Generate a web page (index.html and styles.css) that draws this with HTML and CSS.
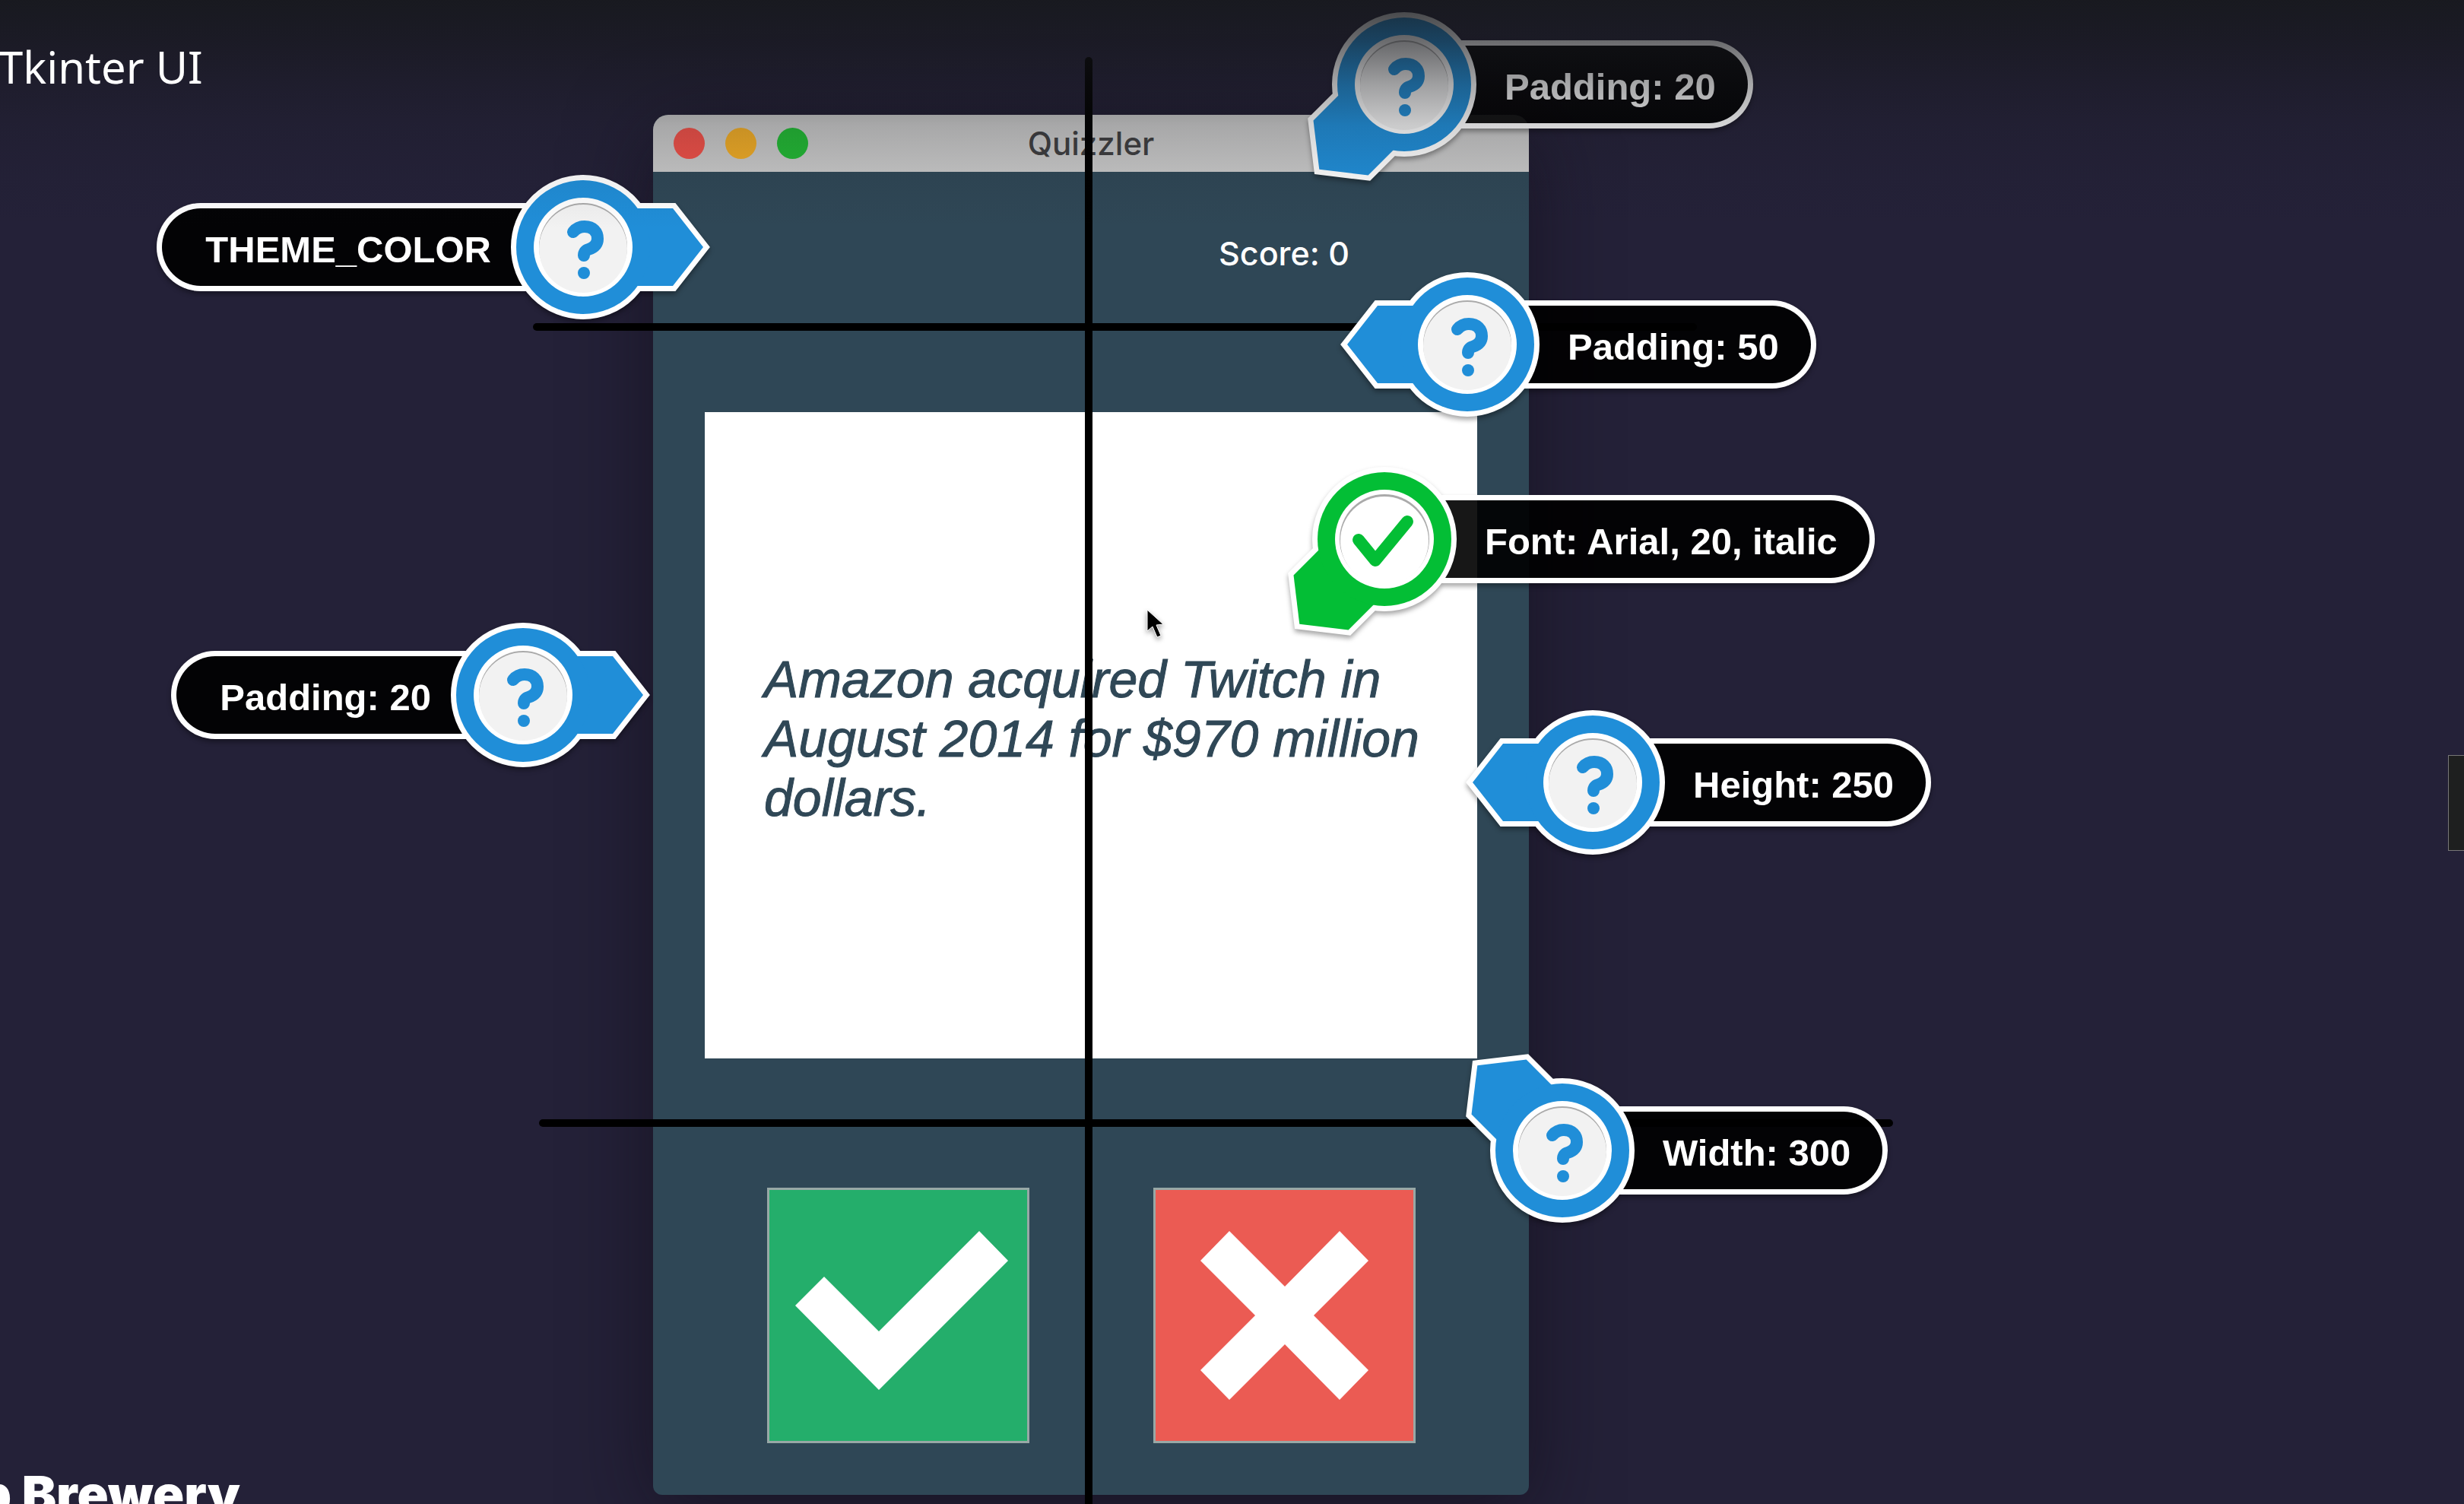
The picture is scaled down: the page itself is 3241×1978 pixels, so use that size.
FILE: index.html
```html
<!DOCTYPE html>
<html lang="en">
<head>
<meta charset="utf-8">
<meta name="viewport" content="width=device-width, initial-scale=1">
<title>Tkinter UI</title>
<link rel="stylesheet" href="styles.css">
</head>
<body>
<svg class="defs" aria-hidden="true">
  <symbol id="arrow" viewBox="-95 -95 190 190" overflow="visible">
    <g class="pin-outline">
      <path d="M-158 0L-118 -51H0V51H-118Z"/>
      <circle r="88"/>
    </g>
    <path d="M-158 0L-118 -51H0V51H-118Z"/>
    <circle r="88"/>
  </symbol>
  <symbol id="question" viewBox="-95 -95 190 190">
    <circle r="65" fill="#fff"/>
    <circle r="58" fill="#aaa"/>
    <circle r="58" cy="2" fill="#f2f2f2"/>
    <path class="mark" d="M-13 -20C-8 -26 -3 -27 2 -27C13 -27 19 -20 19 -11C19 -3 13 1 7 3C3 4 1 7 1 11"/>
    <circle cx="1" cy="34" r="8"/>
  </symbol>
  <symbol id="tick" viewBox="-95 -95 190 190">
    <circle r="65" fill="#fff"/>
    <circle r="59" fill="#aaa"/>
    <circle r="58" cy="2" fill="#fff"/>
    <path class="mark" d="M-34 1L-12 28L30 -23"/>
  </symbol>
</svg>

<header class="lecture">
  <h1 class="lecture-title">Tkinter UI</h1>
</header>

<main class="stage">
  <section class="window">
    <div class="titlebar">
      <span class="light red"></span>
      <span class="light amber"></span>
      <span class="light green"></span>
      <h2 class="window-title">Quizzler</h2>
    </div>
    <div class="content">
      <p class="score">Score: 0</p>
      <div class="card"><p class="question">Amazon acquired Twitch in August 2014 for $970 million dollars.</p></div>
      <button class="answer true" type="button" aria-label="True">
        <svg viewBox="0 0 345 336"><path d="M279 57L317 96L147 266L37 155L75 117L147 189Z"/></svg>
      </button>
      <button class="answer false" type="button" aria-label="False">
        <svg viewBox="0 0 345 336"><path d="M100 57L62 96L134 168L62 240L100 279L173 206L245 279L283 240L211 168L283 96L245 57L173 130Z"/></svg>
      </button>
    </div>

    <div class="guide column"></div>
    <div class="guide row-top"></div>
    <div class="guide row-bottom"></div>

    <div class="pin after pad-title">
      <svg class="badge"><use href="#arrow" transform="rotate(-45 95 95)"/><use href="#question"/></svg>
      <span class="label">Padding: 20</span>
    </div>
    <div class="pin before theme">
      <span class="label">THEME_COLOR</span>
      <svg class="badge"><use href="#arrow" transform="rotate(180 95 95)"/><use href="#question"/></svg>
    </div>
    <div class="pin after pad-card">
      <svg class="badge"><use href="#arrow"/><use href="#question"/></svg>
      <span class="label">Padding: 50</span>
    </div>
    <div class="pin after font done">
      <svg class="badge"><use href="#arrow" transform="rotate(-45 95 95)"/><use href="#tick"/></svg>
      <span class="label">Font: Arial, 20, italic</span>
    </div>
    <div class="pin before pad-window">
      <span class="label">Padding: 20</span>
      <svg class="badge"><use href="#arrow" transform="rotate(180 95 95)"/><use href="#question"/></svg>
    </div>
    <div class="pin after height">
      <svg class="badge"><use href="#arrow"/><use href="#question"/></svg>
      <span class="label">Height: 250</span>
    </div>
    <div class="pin after width">
      <svg class="badge"><use href="#arrow" transform="rotate(45 95 95)"/><use href="#question"/></svg>
      <span class="label">Width: 300</span>
    </div>

    <svg class="pointer" viewBox="0 0 24 40" aria-hidden="true"><path d="M1 1V29L8 23L14 37L19 35L13 21L22 20Z"/></svg>
  </section>
</main>

<div class="shade"></div>
<p class="brand">App Brewery</p>
<div class="side-tab"></div>
</body>
</html>
```
FILE: styles.css
```css
* {
  box-sizing: border-box;
}

body {
  position: relative;
  margin: 0;
  min-height: 100vh;
  overflow: hidden;
  background: #242138;
  font-family: "Liberation Sans", Arial, sans-serif;
}

h1, h2, p {
  margin: 0;
}

.defs {
  position: absolute;
  width: 0;
  height: 0;
}

/* Player chrome */
.lecture {
  position: relative;
  z-index: 3;
  height: 151px;
  padding-top: 48px;
}

.lecture-title {
  margin-left: -2px;
  color: #fff;
  font: 400 58px/80px "Noto Sans", "Open Sans", sans-serif;
}

.shade {
  position: absolute;
  inset: 0 0 auto;
  z-index: 2;
  height: 300px;
  pointer-events: none;
  background: linear-gradient(
    rgba(22, 24, 27, 0.84) 0,
    rgba(22, 23, 27, 0.64) 53px,
    rgba(22, 23, 27, 0.38) 110px,
    rgba(22, 23, 27, 0.18) 165px,
    rgba(22, 23, 27, 0.07) 230px,
    rgba(22, 23, 27, 0) 300px);
}

.brand {
  position: absolute;
  right: calc(100% - 316px);
  bottom: -27px;
  color: #fff;
  font: 900 68px/80px Inter, sans-serif;
  white-space: nowrap;
}

.side-tab {
  position: absolute;
  top: 993px;
  right: 0;
  width: 21px;
  height: 126px;
  border: 1px solid #777;
  border-right: 0;
  background: #1e1f1f;
}

/* Application window */
.stage {
  display: grid;
  grid-template-columns: 859fr 1152fr 1230fr;
}

.window {
  position: relative;
  grid-column: 2;
  min-width: 0;
  border-radius: 20px 20px 12px 12px;
  background: #2f4756;
  box-shadow: 0 24px 110px rgba(16, 12, 24, 0.6);
}

.titlebar {
  position: relative;
  display: flex;
  align-items: center;
  gap: 27px;
  height: 75px;
  padding: 0 27px;
  border-radius: 20px 20px 0 0;
  background: #c8c8c8;
}

.light {
  width: 41px;
  height: 41px;
  border-radius: 50%;
}

.red { background: #ee5048; }
.amber { background: #efab26; }
.green { background: #22b834; }

.window-title {
  position: absolute;
  inset: 0;
  color: #3e3e40;
  font: 500 42px/76px Inter, sans-serif;
  text-align: center;
}

.content {
  display: grid;
  grid-template-columns: 1fr 1fr;
  justify-items: center;
  row-gap: 170px;
  padding: 68px;
}

.score {
  grid-column: 2;
  color: #fff;
  font: 500 43px/78px Inter, sans-serif;
}

.card {
  display: flex;
  align-items: center;
  grid-column: 1 / -1;
  width: 100%;
  height: 850px;
  padding: 8px 72px 0 78px;
  background: #fff;
}

.question {
  color: #2f4756;
  font-size: 68px;
  font-style: italic;
  line-height: 78px;
  -webkit-text-stroke: 1px #2f4756;
}

.answer {
  width: 345px;
  height: 336px;
  padding: 0;
  border: 0;
  outline: 3px solid #98a8a6;
  outline-offset: -3px;
}

.answer svg {
  display: block;
  fill: #fff;
}

.true { background: #24ae6b; }
.false { background: #eb5b53; }

/* Grid guides drawn over the window */
.guide {
  position: absolute;
  border-radius: 5px;
  background: #000;
}

.column {
  top: -76px;
  bottom: -20px;
  left: 568px;
  width: 10px;
}

.row-top {
  top: 274px;
  left: -158px;
  width: 1531px;
  height: 10px;
}

.row-bottom {
  top: 1321px;
  left: -150px;
  width: 1781px;
  height: 10px;
}

/* Annotation pins */
.pin {
  position: absolute;
  display: flex;
  align-items: center;
  height: 190px;
  color: #208ed8;
  filter: drop-shadow(0 4px 3px rgba(0, 0, 0, 0.35));
}

.done {
  color: #03be35;
}

.badge {
  position: relative;
  z-index: 1;
  flex: none;
  width: 190px;
  height: 190px;
  overflow: visible;
  fill: currentColor;
}

.badge use {
  width: 190px;
  height: 190px;
}

.pin-outline {
  fill: #fff;
  stroke: #fff;
  stroke-width: 14;
}

.mark {
  fill: none;
  stroke: currentColor;
  stroke-width: 16;
  stroke-linecap: round;
  stroke-linejoin: round;
}

.label {
  height: 116px;
  border: 7px solid #fff;
  border-radius: 58px;
  background: rgba(0, 0, 0, 0.87);
  background-clip: padding-box;
  color: #fff;
  font-size: 49px;
  font-weight: 700;
  line-height: 108px;
  white-space: nowrap;
}

.after .label {
  margin-left: -95px;
  padding: 0 42px 0 132px;
  border-left: 0;
  border-radius: 0 58px 58px 0;
}

.before .label {
  margin-right: -95px;
  padding: 0 121px 0 57px;
  border-right: 0;
  border-radius: 58px 0 0 58px;
}

.pad-title { top: -135px; left: 893px; }
.theme { top: 79px; right: 1149px; }
.pad-card { top: 207px; left: 976px; }
.font { top: 463px; left: 867px; }
.pad-window { top: 668px; right: 1228px; }
.height { top: 783px; left: 1141px; }
.width { top: 1267px; left: 1101px; }

.pointer {
  position: absolute;
  top: 650px;
  left: 649px;
  width: 24px;
  height: 40px;
  stroke: #fff;
  stroke-width: 1;
  filter: drop-shadow(0 3px 3px rgba(0, 0, 0, 0.4));
}
```
